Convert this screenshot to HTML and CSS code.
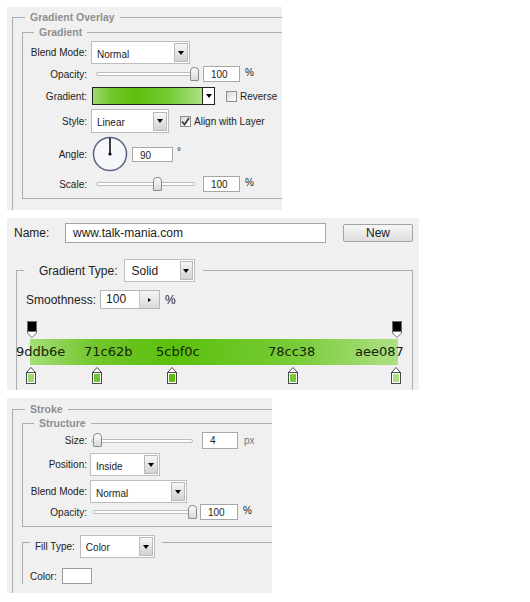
FILE: index.html
```html
<!DOCTYPE html>
<html lang="en">
<head>
<meta charset="UTF-8">
<title>Layer Style settings</title>
<link rel="stylesheet" href="styles.css">
</head>
<body>

<!-- Gradient Overlay -->
<div class="panel overlay-panel">
    <fieldset class="group outer">
        <legend>Gradient Overlay</legend>
        <fieldset class="group inner boxed">
            <legend>Gradient</legend>
            <div class="row r-blend">
                <span class="label">Blend Mode:</span>
                <div class="select" style="width: 99px"><span>Normal</span><i class="arrow"></i></div>
            </div>
            <div class="row r-opacity">
                <span class="label">Opacity:</span>
                <div class="slider" style="margin-left: 5px; width: 99px"><i class="thumb" style="left: 94px"></i></div>
                <div class="field" style="margin-left: 8px; width: 37px">100</div>
                <span class="unit">%</span>
            </div>
            <div class="row r-gradient">
                <span class="label">Gradient:</span>
                <div class="swatch-picker">
                    <div class="ramp-preview"></div>
                    <i class="arrow plain"></i>
                </div>
                <i class="check"></i>
                <span class="check-text">Reverse</span>
            </div>
            <div class="row r-style">
                <span class="label">Style:</span>
                <div class="select" style="width: 78px; height: 24px"><span>Linear</span><i class="arrow"></i></div>
                <i class="check on" style="margin-left: 11px">
                    <svg width="9" height="9" viewBox="0 0 9 9"><path d="M1 4.5 L3.5 7.5 L8 1" fill="none" stroke="#3c3c3c" stroke-width="1.8"/></svg>
                </i>
                <span class="check-text">Align with Layer</span>
            </div>
            <div class="row r-angle">
                <span class="label">Angle:</span>
                <svg class="dial" width="36" height="36" viewBox="0 0 36 36">
                    <circle cx="18" cy="18" r="16.5" fill="#f7f8fb" stroke="#5a6482" stroke-width="1.5"/>
                    <line x1="18" y1="2" x2="18" y2="18" stroke="#000" stroke-width="1.5"/>
                    <circle cx="18" cy="18" r="1.6" fill="#000"/>
                </svg>
                <div class="field" style="margin-left: 4px; width: 41px; height: 15px">90</div>
                <span class="unit deg">°</span>
            </div>
            <div class="row r-scale">
                <span class="label">Scale:</span>
                <div class="slider" style="margin-left: 5px; width: 99px"><i class="thumb" style="left: 57px"></i></div>
                <div class="field" style="margin-left: 8px; width: 37px">100</div>
                <span class="unit">%</span>
            </div>
        </fieldset>
    </fieldset>
</div>

<!-- Gradient editor -->
<div class="panel editor-panel">
    <div class="name-row">
        <span class="name-label">Name:</span>
        <div class="name-field">www.talk-mania.com</div>
        <button class="new-button">New</button>
    </div>
    <fieldset class="type-group">
        <legend>
            <span class="legend-row">
                <span>Gradient Type:</span>
                <span class="select big" style="width: 71px"><span>Solid</span><i class="arrow"></i></span>
            </span>
        </legend>
        <div class="smooth-row">
            <span>Smoothness:</span>
            <div class="spin"><span>100</span><i class="spin-btn"></i></div>
            <span class="smooth-unit">%</span>
        </div>
        <div class="ramp">
            <div class="stops top-stops">
                <svg class="stop" style="left: -3px" width="10" height="17" viewBox="0 0 10 17"><rect x="0.5" y="0.5" width="9" height="10" fill="#000" stroke="#6d6d6d"/><path d="M0.5 10.5 L9.5 10.5 L9.5 12 L5 16.5 L0.5 12 Z" fill="#fff" stroke="#6d6d6d"/></svg>
                <svg class="stop" style="left: 362px" width="10" height="17" viewBox="0 0 10 17"><rect x="0.5" y="0.5" width="9" height="10" fill="#000" stroke="#6d6d6d"/><path d="M0.5 10.5 L9.5 10.5 L9.5 12 L5 16.5 L0.5 12 Z" fill="#fff" stroke="#6d6d6d"/></svg>
            </div>
            <div class="bar">
                <span class="hex" style="left: -14px">9ddb6e</span>
                <span class="hex" style="left: 54px">71c62b</span>
                <span class="hex" style="left: 126px">5cbf0c</span>
                <span class="hex" style="left: 238px">78cc38</span>
                <span class="hex" style="left: 325px">aee087</span>
            </div>
            <div class="stops bottom-stops">
                <svg class="stop" style="left: -4px" width="10" height="17" viewBox="0 0 10 17"><path d="M0.5 5.5 L5 0.5 L9.5 5.5 Z" fill="#fff" stroke="#4a4a4a"/><rect x="0.5" y="5.5" width="9" height="11" fill="#fff" stroke="#4a4a4a"/><rect x="2" y="7" width="6" height="8" fill="#9ddb6e"/></svg>
                <svg class="stop" style="left: 62px" width="10" height="17" viewBox="0 0 10 17"><path d="M0.5 5.5 L5 0.5 L9.5 5.5 Z" fill="#fff" stroke="#4a4a4a"/><rect x="0.5" y="5.5" width="9" height="11" fill="#fff" stroke="#4a4a4a"/><rect x="2" y="7" width="6" height="8" fill="#71c62b"/></svg>
                <svg class="stop" style="left: 137px" width="10" height="17" viewBox="0 0 10 17"><path d="M0.5 5.5 L5 0.5 L9.5 5.5 Z" fill="#fff" stroke="#4a4a4a"/><rect x="0.5" y="5.5" width="9" height="11" fill="#fff" stroke="#4a4a4a"/><rect x="2" y="7" width="6" height="8" fill="#5cbf0c"/></svg>
                <svg class="stop" style="left: 258px" width="10" height="17" viewBox="0 0 10 17"><path d="M0.5 5.5 L5 0.5 L9.5 5.5 Z" fill="#fff" stroke="#4a4a4a"/><rect x="0.5" y="5.5" width="9" height="11" fill="#fff" stroke="#4a4a4a"/><rect x="2" y="7" width="6" height="8" fill="#78cc38"/></svg>
                <svg class="stop" style="left: 361px" width="10" height="17" viewBox="0 0 10 17"><path d="M0.5 5.5 L5 0.5 L9.5 5.5 Z" fill="#fff" stroke="#4a4a4a"/><rect x="0.5" y="5.5" width="9" height="11" fill="#fff" stroke="#4a4a4a"/><rect x="2" y="7" width="6" height="8" fill="#aee087"/></svg>
            </div>
        </div>
    </fieldset>
</div>

<!-- Stroke -->
<div class="panel stroke-panel">
    <fieldset class="group outer">
        <legend>Stroke</legend>
        <fieldset class="group inner boxed structure">
            <legend>Structure</legend>
            <div class="row s-size">
                <span class="label">Size:</span>
                <div class="slider" style="width: 102px"><i class="thumb" style="left: 2px"></i></div>
                <div class="field" style="margin-left: 9px; width: 36px; height: 17px">4</div>
                <span class="unit px">px</span>
            </div>
            <div class="row s-position">
                <span class="label">Position:</span>
                <div class="select" style="margin-left: -1px; width: 70px"><span>Inside</span><i class="arrow"></i></div>
            </div>
            <div class="row s-blend">
                <span class="label">Blend Mode:</span>
                <div class="select" style="margin-left: -1px; width: 97px"><span>Normal</span><i class="arrow"></i></div>
            </div>
            <div class="row s-opacity">
                <span class="label">Opacity:</span>
                <div class="slider" style="margin-left: 2px; width: 100px"><i class="thumb" style="left: 95px"></i></div>
                <div class="field" style="margin-left: 7px; width: 38px">100</div>
                <span class="unit">%</span>
            </div>
        </fieldset>
        <fieldset class="group inner fill">
            <legend>
                <span class="legend-row">
                    <span>Fill Type:</span>
                    <span class="select" style="width: 75px"><span>Color</span><i class="arrow"></i></span>
                </span>
            </legend>
            <div class="color-row">
                <span>Color:</span>
                <div class="color-chip"></div>
            </div>
        </fieldset>
    </fieldset>
</div>

</body>
</html>
```

FILE: styles.css
```css
body {
    margin: 0;
    background-color: #fff;
    font-family: "Liberation Sans", Arial, sans-serif;
    font-size: 10px;
    color: #222;
}
.panel {
    background-color: #f0f0f0;
    overflow: hidden;
    margin-left: 7px;
}
.overlay-panel {
    margin-top: 7px;
    width: 275px;
    height: 203px;
}
.editor-panel {
    margin-top: 8px;
    width: 412px;
    height: 172px;
}
.stroke-panel {
    margin-top: 8px;
    width: 265px;
    height: 195px;
}

/* grouping frames */
fieldset {
    margin: 0;
    padding: 0;
    min-width: 0;
    border: 0;
}
.group {
    border-top: 1px solid #adadad;
    border-left: 1px solid #adadad;
}
.group > legend {
    padding: 0 5px;
    font-weight: bold;
    font-size: 10.5px;
    line-height: 14px;
    color: #8f8f8f;
}
.outer {
    margin-left: 5px;
    padding-bottom: 12px;
}
.outer > legend {
    margin-left: 12px;
}
.overlay-panel .outer {
    margin-top: 3px;
}
.stroke-panel .outer {
    margin-top: 4px;
}
.inner {
    margin-left: 9px;
}
.inner > legend {
    margin-left: 11px;
}
.overlay-panel .inner {
    margin-top: 1px;
}
.boxed {
    border-bottom: 1px solid #adadad;
    padding-bottom: 6px;
}

/* label + control rows */
.row {
    display: flex;
    align-items: center;
}
.label {
    width: 64px;
    flex: none;
    text-align: right;
    margin-right: 4px;
}
.r-blend { margin-top: 2px; }
.r-opacity { margin-top: 2px; }
.r-gradient { margin-top: 5px; }
.r-style { margin-top: 4px; }
.r-angle { margin-top: 3px; }
.r-scale { margin-top: 4px; }
.s-size { margin-top: 2px; }
.s-position { margin-top: 4px; }
.s-blend { margin-top: 4px; }
.s-opacity { margin-top: 1px; }

.select {
    box-sizing: border-box;
    height: 23px;
    display: flex;
    align-items: center;
    background-color: #fff;
    border: 1px solid #bdbdbd;
    padding-left: 5px;
    flex: none;
}
.select > span {
    flex: 1;
    padding-top: 3px;
}
.arrow {
    box-sizing: border-box;
    width: 14px;
    height: 19px;
    margin-right: 1px;
    border: 1px solid #b9b9b9;
    background: linear-gradient(#f6f6f6, #d3d3d3);
    display: flex;
    align-items: center;
    justify-content: center;
}
.arrow::after {
    content: "";
    border-left: 3.5px solid transparent;
    border-right: 3.5px solid transparent;
    border-top: 4px solid #000;
}
.arrow.plain {
    width: 12px;
    height: 18px;
    margin: 0;
    border: 1px solid #222;
    border-left: 0;
    background: #fff;
}

.field {
    box-sizing: border-box;
    height: 16px;
    line-height: 14px;
    padding-left: 7px;
    padding-top: 1px;
    background-color: #fff;
    border: 1px solid #a8a8a8;
    flex: none;
}
.unit {
    margin-left: 5px;
    margin-top: -4px;
}
.unit.px {
    margin-left: 6px;
    margin-top: 0;
    color: #777;
}
.unit.deg {
    margin-left: 4px;
    align-self: flex-start;
    margin-top: 10px;
}

.slider {
    position: relative;
    height: 15px;
    display: flex;
    align-items: center;
    flex: none;
}
.slider::before {
    content: "";
    flex: 1;
    height: 2px;
    border: 1px solid #bcbcbc;
    border-radius: 2px;
    background-color: #fff;
}
.thumb {
    position: absolute;
    top: 0;
    box-sizing: border-box;
    width: 9px;
    height: 14px;
    border: 1px solid #8a8a8a;
    border-radius: 4px 4px 1px 1px;
    background: linear-gradient(#fdfdfd, #d8d8d8);
}

.swatch-picker {
    display: flex;
    margin-left: 1px;
    flex: none;
}
.ramp-preview {
    width: 109px;
    height: 16px;
    border: 1px solid #222;
    background: linear-gradient(to right, #9ddb6e 0%, #71c62b 18%, #5cbf0c 39%, #78cc38 72%, #aee087 100%);
}
.check {
    box-sizing: border-box;
    width: 11px;
    height: 11px;
    margin-left: 11px;
    border: 1px solid #8e8e8e;
    background: linear-gradient(135deg, #d9d9d9, #fff);
    display: flex;
    align-items: center;
    justify-content: center;
    flex: none;
}
.check-text {
    margin-left: 3px;
}
.dial {
    margin-left: 1px;
    flex: none;
}

/* gradient editor */
.name-row {
    display: flex;
    align-items: center;
    height: 20px;
    padding: 5px 6px 0 7px;
    font-size: 12px;
}
.name-label {
    width: 51px;
}
.name-field {
    box-sizing: border-box;
    width: 261px;
    height: 20px;
    line-height: 18px;
    padding-left: 7px;
    background-color: #fff;
    border: 1px solid #a5a5a5;
}
.new-button {
    margin-left: auto;
    width: 70px;
    height: 18px;
    padding: 0;
    font-family: inherit;
    font-size: 12px;
    color: #222;
    border: 1px solid #a3a3a3;
    border-radius: 2px;
    background: linear-gradient(#f7f7f7, #dedede);
}
.type-group {
    margin: 15px 6px 0 9px;
    padding: 0 0 10px 9px;
    border: 1px solid #adadad;
    border-bottom: 0;
    font-size: 12px;
}
.type-group > legend {
    margin-left: -2px;
    padding: 1px 8px 0 15px;
}
.legend-row {
    display: flex;
    align-items: center;
    gap: 6px;
}
.select.big > span {
    padding-top: 0;
    padding-left: 2px;
}
.select.big .arrow {
    width: 13px;
}
.smooth-row {
    display: flex;
    align-items: center;
    margin-top: 8px;
    height: 19px;
}
.spin {
    box-sizing: border-box;
    display: flex;
    width: 60px;
    height: 19px;
    margin-left: 4px;
    background-color: #fff;
    border: 1px solid #b5b5b5;
}
.spin > span {
    flex: 1;
    padding-left: 5px;
    line-height: 17px;
}
.spin-btn {
    width: 19px;
    border-left: 1px solid #c6c6c6;
    background: linear-gradient(#f4f4f4, #d9d9d9);
    display: flex;
    align-items: center;
    justify-content: center;
}
.spin-btn::after {
    content: "";
    border-top: 2.5px solid transparent;
    border-bottom: 2.5px solid transparent;
    border-left: 3px solid #000;
}
.smooth-unit {
    margin-left: 5px;
}

.ramp {
    width: 368px;
    margin: 12px 0 0 4px;
}
.stops {
    position: relative;
    height: 17px;
}
.stop {
    position: absolute;
    top: 0;
}
.top-stops {
    margin-bottom: 1px;
}
.bottom-stops {
    margin-top: 2px;
}
.bar {
    position: relative;
    height: 26px;
    background: linear-gradient(to right, #a4de76 0%, #71c62b 18%, #5cbf0c 39%, #78cc38 72%, #aee087 100%);
}
.hex {
    position: absolute;
    top: 0;
    line-height: 26px;
    font-family: "DejaVu Sans", Verdana, sans-serif;
    font-size: 13px;
    color: #15230a;
}

/* stroke */
.structure {
    margin-top: 0;
}
.fill {
    border-left: 1px solid #adadad;
}
.fill > legend {
    margin-left: 7px;
    padding: 8px 7px 0 5px;
    font-weight: normal;
    font-size: 10px;
    color: #222;
}
.fill .legend-row {
    gap: 5px;
}
.color-row {
    display: flex;
    align-items: center;
    margin-top: 10px;
    padding-left: 7px;
}
.color-chip {
    box-sizing: border-box;
    width: 30px;
    height: 16px;
    margin-left: 5px;
    background-color: #fff;
    border: 1px solid #9c9c9c;
}
```
